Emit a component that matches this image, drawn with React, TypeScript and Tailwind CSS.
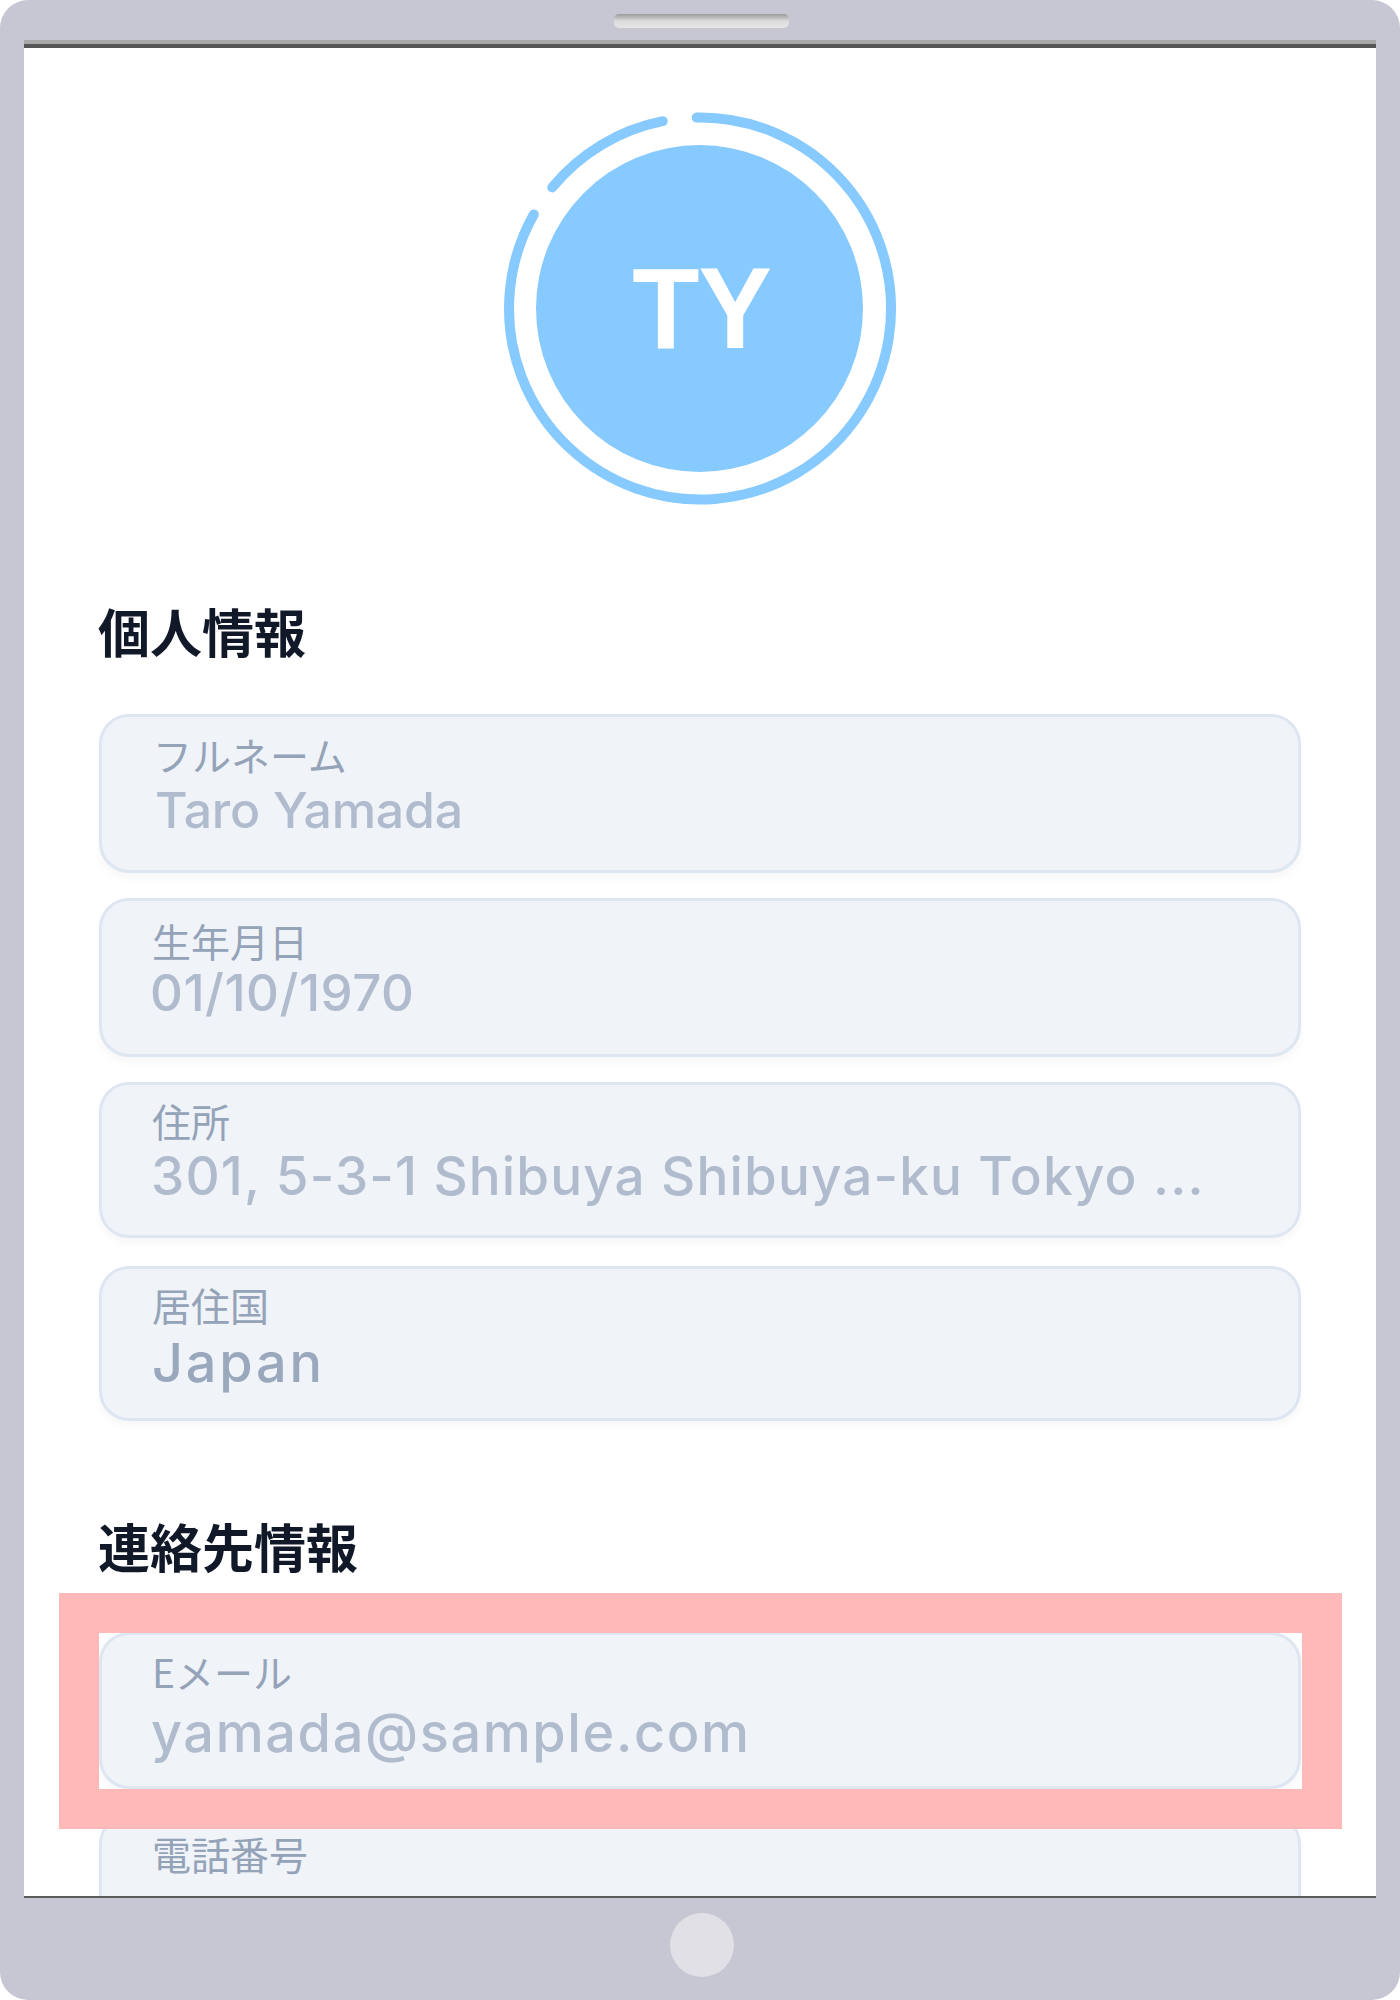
import React from "react";

const JP = "font-['Noto_Sans_CJK_JP','Noto_Sans',sans-serif]";

type FieldProps = {
  label: string;
  value?: string;
  box: string;
  labelClass?: string;
  valueClass?: string;
};

function Field({ label, value, box, labelClass = "", valueClass = "" }: FieldProps) {
  return (
    <div
      className={
        "shrink-0 flex flex-col rounded-[30px] border-[3px] border-[#dde6f1] bg-[#f0f3f8] shadow-[0_5px_8px_rgba(30,41,59,0.035)] " +
        box
      }
    >
      <div className={"shrink-0 h-[38px] text-[39px] leading-[38px] font-normal text-[#94a3b8] whitespace-nowrap " + JP + " " + labelClass}>
        {label}
      </div>
      {value && (
        <div className={"shrink-0 h-[56px] leading-[56px] font-medium font-['Inter',sans-serif] whitespace-nowrap " + valueClass}>
          {value}
        </div>
      )}
    </div>
  );
}

function Avatar() {
  return (
    <div className="relative shrink-0 mt-[60px] self-center w-[400px] h-[400px] flex items-center justify-center">
      <svg width="400" height="400" viewBox="0 0 400 400" className="absolute inset-0" fill="none">
        <path
          d="M196.67 9.53 A191 191 0 1 1 33.8 106.45"
          stroke="#87caff"
          strokeWidth="10"
          strokeLinecap="round"
        />
        <path
          d="M162.73 13.17 A191 191 0 0 0 52.3 79.4"
          stroke="#87caff"
          strokeWidth="10"
          strokeLinecap="round"
        />
      </svg>
      <div className="-ml-[1px] w-[327px] h-[327px] rounded-full bg-[#87caff] flex items-center justify-center font-['Liberation_Sans',sans-serif] font-bold text-white text-[110px] leading-none tracking-[-1px]">
        <span className="ml-[4px] scale-y-[1.05]">TY</span>
      </div>
    </div>
  );
}

export default function App() {
  return (
    <div className="relative w-[1400px] h-[2000px] bg-white overflow-hidden">
      <div className="w-full h-full rounded-[28px] bg-[#c7c7d3] flex flex-col">
        <div className="h-[40px] shrink-0 flex justify-center pt-[14px]">
          <div className="w-[175px] h-[14px] ml-[2px] rounded-[5px] bg-gradient-to-b from-[#9a9a9a] via-[#dcdcdc] to-[#e6e6e6]" />
        </div>
        <div className="mx-[24px] h-[4px] shrink-0 bg-[#a8a8a8]" />
        <div className="mx-[24px] h-[1854px] shrink-0 flex flex-col overflow-hidden bg-white border-t-[4px] border-t-[#555555] border-b-[2px] border-b-[#5a5a5a] px-[75px]">
          <Avatar />
          <h2 className={"shrink-0 mt-[91px] -ml-[1px] h-[64px] text-[52px] leading-[64px] font-bold text-[#111827] " + JP}>個人情報</h2>
          <div className="shrink-0 mt-[51px] flex flex-col gap-[25px]">
            <Field
              label="フルネーム"
              value="Taro Yamada"
              box="h-[159px] pt-[18px] pl-[53px]"
              labelClass="-ml-[2px]"
              valueClass="text-[50px] text-[#b0bccd] mt-[9px] tracking-[-0.25px]"
            />
            <Field
              label="生年月日"
              value="01/10/1970"
              box="h-[159px] pt-[20px] pl-[50px]"
              valueClass="text-[51px] text-[#b0bccd] mt-[6px] -ml-[2px] tracking-[0.5px]"
            />
            <Field
              label="住所"
              value="301, 5-3-1 Shibuya Shibuya-ku Tokyo ..."
              box="h-[156px] pt-[16px] pl-[50px]"
              valueClass="text-[53px] text-[#b0bccd] mt-[9px] -ml-[1px] tracking-[1.15px]"
            />
            <Field
              label="居住国"
              value="Japan"
              box="h-[155px] mt-[3px] pt-[16px] pl-[50px]"
              valueClass="text-[54px] text-[#9aa8bd] mt-[12px] tracking-[2.8px]"
            />
          </div>
          <h2 className={"shrink-0 mt-[93px] -ml-[1px] h-[64px] text-[52px] leading-[64px] font-bold text-[#111827] " + JP}>連絡先情報</h2>
          <div className="shrink-0 mt-[54px] flex flex-col gap-[25px]">
            <Field
              label="Eメール"
              value="yamada@sample.com"
              box="h-[157px] pt-[17px] pl-[50px]"
              valueClass="text-[54px] text-[#b0bccd] mt-[15px] -ml-[1px] tracking-[1.65px]"
            />
            <Field label="電話番号" box="h-[154px] pt-[17px] pl-[50px]" />
          </div>
        </div>
        <div className="flex-1 flex justify-center pt-[15px]">
          <div className="w-[64px] h-[64px] ml-[4px] rounded-full bg-[#e0e0e6]" />
        </div>
      </div>
      <div className="absolute left-[59px] top-[1593px] w-[1283px] h-[236px] border-[40px] border-[#ffb9b9]" />
    </div>
  );
}
